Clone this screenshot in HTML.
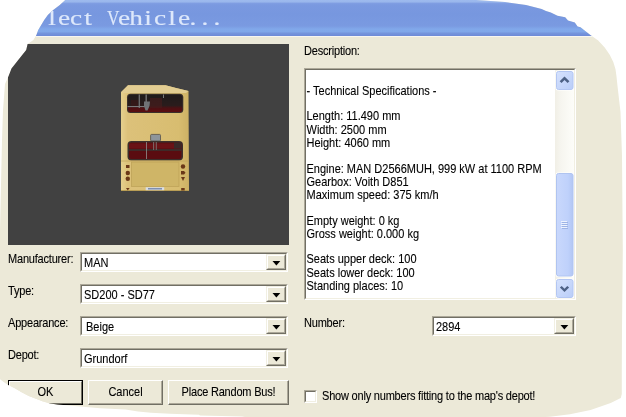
<!DOCTYPE html>
<html><head><meta charset="utf-8">
<style>
*{margin:0;padding:0;box-sizing:border-box}
html,body{width:626px;height:417px;overflow:hidden;background:#fff}
body{position:relative;font-family:"Liberation Sans",sans-serif;font-size:11px;color:#000;-webkit-text-stroke:0.1px #000}
#win{position:absolute;left:0;top:0;width:626px;height:417px;background:#ece9d8;
clip-path:polygon(65.2px 0px,476px 0px,505px 2px,526px 5px,541.6px 9px,546px 11px,550.8px 12.5px,557.5px 15.8px,565.2px 17.3px,568px 20.6px,574.8px 22.5px,577.6px 26.4px,580.5px 27.3px,591px 35.5px,591.8px 36px,598.2px 40.4px,604.7px 47.6px,609.7px 54.8px,613.3px 62px,615.5px 69.2px,616.5px 76.4px,617.5px 86px,620.5px 112px,622px 156px,622.8px 250px,622px 330px,621.8px 370px,621.8px 394px,620.8px 398px,610.7px 403px,590.6px 410px,570px 414.3px,550px 416.7px,545px 417px,245px 417px,242px 416.5px,200px 415.6px,199px 414.7px,170px 413.8px,151px 412.8px,138px 411.5px,125.6px 409.6px,100px 408.3px,86px 406.9px,57.5px 404.5px,50.3px 403.4px,43.1px 401.6px,35.9px 398.8px,28.8px 395.9px,21.6px 392.3px,14.4px 388px,7.2px 384.4px,0px 379.3px,0px 230px,2px 140px,3px 110px,5px 84px,8.6px 76px,11.5px 68.5px,19.2px 58.8px,26.2px 50px,27.6px 44px,33.4px 40px,36.4px 35px,38.2px 30px,41.2px 25px,44.2px 20px,47.8px 15px,53.2px 10px,59.8px 5px)}
.abs{position:absolute}
#title{left:0;top:0;width:626px;height:36px;background:linear-gradient(#9dbaee 0,#9ab7ec 1.8px,#7f9de2 3.5px,#7a99e0 5px,#7797df 14px,#7a9ae1 26px,#81a8ea 29px,#80a7e9 31.5px,#7494dc 33.5px,#6e8ad7 36px)}
#title span{-webkit-text-stroke:0.15px #dde8fb;position:absolute;left:22px;top:6px;font-family:"Liberation Serif",serif;font-size:21px;line-height:24px;color:#dde8fb;white-space:pre}
#title i{display:inline-block;width:12px;text-align:center;font-style:normal;transform:scaleX(1.3)}
#sep{left:0;top:36px;width:626px;height:1px;background:#f7f6f0}
#view{left:8px;top:44px;width:281px;height:201px;background:#414141}
.lbl{position:absolute;white-space:pre;line-height:13px;letter-spacing:-0.2px;transform:scaleY(1.1);transform-origin:0 10.3px}
.combo{position:absolute;background:#fff;border-top:1px solid #aca899;border-left:1px solid #aca899;border-right:1px solid #fff;border-bottom:1px solid #fff}
.combo .in{position:absolute;left:0;top:0;right:0;bottom:0;border-top:1px solid #716f64;border-left:1px solid #716f64;border-right:1px solid #f1efe2;border-bottom:1px solid #f1efe2}
.combo .txt{position:absolute;left:2px;top:3px;white-space:pre;line-height:13px;transform:scaleY(1.1);transform-origin:0 10.3px}
.combo .btn{position:absolute;right:0;top:0;width:20px;bottom:0;background:#ece9d8;border-top:1px solid #f1efe2;border-left:1px solid #f1efe2;border-right:1px solid #716f64;border-bottom:1px solid #716f64}
.combo .btn i{position:absolute;left:0;top:0;right:0;bottom:0;border-top:1px solid #fff;border-left:1px solid #fff;border-right:1px solid #aca899;border-bottom:1px solid #aca899}
.combo .btn svg{position:absolute;left:5px;top:6px}
.pbtn{position:absolute;background:#ece9d8;border-top:1px solid #fff;border-left:1px solid #fff;border-right:1px solid #716f64;border-bottom:1px solid #716f64;text-align:center;line-height:20px}
.bt{display:inline-block;transform:scaleY(1.1)}
.pbtn i{position:absolute;left:0;top:0;right:0;bottom:0;border-right:1px solid #aca899;border-bottom:1px solid #aca899}
#desc{left:304px;top:68px;width:272px;height:232px;background:#fff;border-top:1px solid #aca899;border-left:1px solid #aca899;border-right:1px solid #fff;border-bottom:1px solid #fff}
#desc .in{position:absolute;left:0;top:0;right:0;bottom:0;border-top:1px solid #716f64;border-left:1px solid #716f64;border-right:1px solid #f1efe2;border-bottom:1px solid #f1efe2}
#dtext{position:absolute;left:1.5px;top:2.6px;white-space:pre;line-height:11.8182px;transform:scaleY(1.1);transform-origin:0 0}
</style></head><body>
<div id="win">
 <div id="title" class="abs"><span><i style="visibility:hidden">S</i><i style="visibility:hidden">e</i><i>l</i><i>e</i><i>c</i><i>t</i><i>&nbsp;</i><i style="transform:scaleX(0.82)">V</i><i>e</i><i>h</i><i>i</i><i>c</i><i>l</i><i>e</i><i style="margin-left:-3px;margin-right:3px">.</i><i style="margin-left:-3px;margin-right:3px">.</i><i style="margin-left:-3px;margin-right:3px">.</i></span></div>
 <div id="sep" class="abs"></div>
 <div id="view" class="abs"></div>
 <svg class="abs" style="left:8px;top:44px;filter:blur(0.35px)" width="281" height="201" viewBox="8 44 281 201">
 <defs>
  <linearGradient id="bd" x1="0" x2="1" y1="0" y2="0">
   <stop offset="0" stop-color="#e4cf8e"/><stop offset="0.04" stop-color="#e2ca86"/><stop offset="0.1" stop-color="#dcc17a"/><stop offset="0.85" stop-color="#d8bd70"/><stop offset="1" stop-color="#cdb164"/>
  </linearGradient>
  <linearGradient id="uw" x1="0" x2="0" y1="0" y2="1">
   <stop offset="0" stop-color="#1f1b1b"/><stop offset="0.62" stop-color="#2a1c1c"/><stop offset="0.78" stop-color="#4e1013"/><stop offset="1" stop-color="#5a0d11"/>
  </linearGradient>
 </defs>
 <path d="M121 92 L128 85.3 L165.5 85.3 L176 88 L188.5 91 L189 191 L121 191 Z" fill="url(#bd)"/>
 <path d="M121.5 92 L128 85.3 L165.5 85.3 L176 88 L188.5 91 L186 93 L123 93 Z" fill="#e2cd92"/>
 <rect x="127" y="93.8" width="56.3" height="19.2" rx="3.5" fill="#3a302a"/>
 <rect x="128" y="94.8" width="54.3" height="17.2" rx="2.8" fill="url(#uw)"/>
 <rect x="150" y="98" width="12" height="10" fill="#4a1c1c" opacity="0.6"/>
 <rect x="131" y="100" width="7" height="6" fill="#3c1818" opacity="0.6"/>
 <rect x="138.7" y="94.5" width="1.1" height="13.5" fill="#7f7f80"/>
 <rect x="145.6" y="94.5" width="1.1" height="12" fill="#8a8a8c"/>
 <rect x="127.5" y="106" width="18.5" height="1.1" fill="#7a7a7c"/>
 <path d="M144 101.5 L150 101.5 L149.5 106 L147.5 110.5 L145.5 110.5 L144 106 Z" fill="#707276"/>
 <rect x="163" y="94.5" width="1" height="3.5" fill="#7a7a7a"/>
 <rect x="150.6" y="134.4" width="9.9" height="6.6" rx="1" fill="#8e959b" stroke="#55514a" stroke-width="0.8"/>
 <rect x="127.5" y="141" width="55.5" height="19.5" rx="4" fill="#3b302c"/>
 <rect x="129" y="142.6" width="52.5" height="16.4" rx="2.5" fill="#5a0c10"/>
 <rect x="129" y="143.5" width="52.5" height="5" fill="#6a1216"/>
 <rect x="129" y="149" width="52.5" height="2" fill="#3e2a28"/>
 <rect x="174" y="142.6" width="7.5" height="6" fill="#3a2828"/>
 <rect x="146" y="142" width="0.9" height="17" fill="#8a8280"/>
 <rect x="153.2" y="142" width="0.9" height="8" fill="#7d7575"/>
 <rect x="155.8" y="142" width="0.9" height="8" fill="#7d7575"/>
 <rect x="131.5" y="162" width="47.5" height="24.5" fill="#cfb567" stroke="#bfa459" stroke-width="0.8"/>
 <line x1="121" y1="161" x2="188.5" y2="161" stroke="#c2a65c" stroke-width="0.8"/>
 <line x1="121" y1="190.5" x2="189" y2="190.5" stroke="#b89d55" stroke-width="1"/>
 <g fill="#6a3818">
  <rect x="126" y="165" width="3.5" height="3"/>
  <circle cx="127.8" cy="173" r="2.2"/>
  <circle cx="127.8" cy="178.8" r="2.2"/>
  <path d="M126 188 L129.6 188 L127.8 190.5 Z"/>
  <circle cx="183" cy="166.5" r="2.2"/>
  <path d="M181 171 L184 171 L185.5 172.8 L184 174.6 L181 174.6 Z"/>
  <path d="M181 177 L185 177 L183 181 Z"/>
  <rect x="181.2" y="188" width="3.5" height="2.5"/>
 </g>
 <rect x="145.7" y="187.2" width="18.5" height="3" fill="#d9dde2"/>
 <rect x="148" y="188" width="14" height="1.5" fill="#7f8fb0"/>
</svg>

 <div class="lbl" style="left:8px;top:253px">Manufacturer:</div>
 <div class="combo" style="left:80px;top:252px;width:208px;height:20px"><div class="in"><div class="txt">MAN</div><div class="btn"><i></i><svg width="9" height="6"><path d="M0.5 0 L8.3 0 L4.4 4.6 Z" fill="#000"/></svg></div></div></div>
 <div class="lbl" style="left:8px;top:285px">Type:</div>
 <div class="combo" style="left:80px;top:284px;width:208px;height:20px"><div class="in"><div class="txt">SD200 - SD77</div><div class="btn"><i></i><svg width="9" height="6"><path d="M0.5 0 L8.3 0 L4.4 4.6 Z" fill="#000"/></svg></div></div></div>
 <div class="lbl" style="left:8px;top:317px">Appearance:</div>
 <div class="combo" style="left:80px;top:316px;width:208px;height:20px"><div class="in"><div class="txt" style="left:4px">Beige</div><div class="btn"><i></i><svg width="9" height="6"><path d="M0.5 0 L8.3 0 L4.4 4.6 Z" fill="#000"/></svg></div></div></div>
 <div class="lbl" style="left:8px;top:349px">Depot:</div>
 <div class="combo" style="left:80px;top:348px;width:208px;height:20px"><div class="in"><div class="txt">Grundorf</div><div class="btn"><i></i><svg width="9" height="6"><path d="M0.5 0 L8.3 0 L4.4 4.6 Z" fill="#000"/></svg></div></div></div>

 <div class="pbtn" style="left:8px;top:380px;width:75px;height:25px;border:1px solid #000"><div style="position:absolute;left:0;top:0;right:0;bottom:0;border-top:1px solid #fff;border-left:1px solid #fff;border-right:1px solid #716f64;border-bottom:1px solid #716f64;line-height:21px"><span class="bt">OK</span></div></div>
 <div class="pbtn" style="left:88px;top:380px;width:75px;height:25px;line-height:23px"><i></i><span class="bt">Cancel</span></div>
 <div class="pbtn" style="left:168px;top:380px;width:121px;height:25px;line-height:23px"><i></i><span class="bt" style="letter-spacing:-0.2px">Place Random Bus!</span></div>

 <div class="lbl" style="left:304px;top:44.5px">Description:</div>
 <div id="desc" class="abs"><div class="in"></div>
  <div id="dtext">
- Technical Specifications -

Length: 11.490 mm
Width: 2500 mm
Height: 4060 mm

Engine: MAN D2566MUH, 999 kW at 1100 RPM
Gearbox: Voith D851
Maximum speed: 375 km/h

Empty weight: 0 kg
Gross weight: 0.000 kg

Seats upper deck: 100
Seats lower deck: 100
Standing places: 10</div>

 </div>
 <svg class="abs" style="left:0;top:0" width="626" height="417">
 <defs>
  <linearGradient id="trk" x1="0" x2="1"><stop offset="0" stop-color="#f1efe6"/><stop offset="0.3" stop-color="#f6f5ef"/><stop offset="1" stop-color="#fdfdf9"/></linearGradient>
  <linearGradient id="btg" x1="0" y1="0" x2="1" y2="1"><stop offset="0" stop-color="#d6e2fd"/><stop offset="1" stop-color="#b9cdf8"/></linearGradient>
  <linearGradient id="thg" x1="0" x2="1"><stop offset="0" stop-color="#c9d8fc"/><stop offset="0.7" stop-color="#bfd1fb"/><stop offset="1" stop-color="#b2c6f4"/></linearGradient>
 </defs>
 <rect x="555" y="70" width="19" height="228" fill="url(#trk)"/>
 <rect x="555.5" y="70.5" width="18.5" height="20" rx="2.5" fill="#fff"/>
 <rect x="556.5" y="71.5" width="16.5" height="18" rx="2" fill="url(#btg)" stroke="#b3c6f2" stroke-width="1"/>
 <path d="M559.7 81.2 L564.5 76.6 L569.4 81.2 L567.6 83 L564.5 80 L561.5 83 Z" fill="#4d6185"/>
 <rect x="555.5" y="172.5" width="18.5" height="104.5" rx="2.5" fill="#fff"/>
 <rect x="556.5" y="173.5" width="16.5" height="102.5" rx="2" fill="url(#thg)" stroke="#b0c4f0" stroke-width="1"/>
 <g stroke="#eef3fe" stroke-width="1"><line x1="561" y1="221.5" x2="567" y2="221.5"/><line x1="561" y1="223.5" x2="567" y2="223.5"/><line x1="561" y1="225.5" x2="567" y2="225.5"/><line x1="561" y1="227.5" x2="567" y2="227.5"/></g>
 <g stroke="#9eb4e6" stroke-width="1"><line x1="562" y1="222.5" x2="568" y2="222.5"/><line x1="562" y1="224.5" x2="568" y2="224.5"/><line x1="562" y1="226.5" x2="568" y2="226.5"/><line x1="562" y1="228.5" x2="568" y2="228.5"/></g>
 <rect x="555.5" y="278.5" width="18.5" height="20" rx="2.5" fill="#fff"/>
 <rect x="556.5" y="279.5" width="16.5" height="18" rx="2" fill="url(#btg)" stroke="#b3c6f2" stroke-width="1"/>
 <path d="M559.9 287.6 L564.5 292.1 L569.1 287.6 L567.3 285.9 L564.5 288.7 L561.7 285.9 Z" fill="#4d6185"/>
</svg>

 <div class="lbl" style="left:304px;top:317px">Number:</div>
 <div class="combo" style="left:432px;top:316px;width:144px;height:20px"><div class="in"><div class="txt">2894</div><div class="btn"><i></i><svg width="9" height="6"><path d="M0.5 0 L8.3 0 L4.4 4.6 Z" fill="#000"/></svg></div></div></div>

 <div class="abs" style="left:304px;top:390px;width:13px;height:13px;background:#fff;border-top:1px solid #aca899;border-left:1px solid #aca899;border-right:1px solid #fff;border-bottom:1px solid #fff"><div style="position:absolute;left:0;top:0;right:0;bottom:0;border-top:1px solid #716f64;border-left:1px solid #716f64;border-right:1px solid #f1efe2;border-bottom:1px solid #f1efe2"></div></div>
 <div class="lbl" style="left:322px;top:390px">Show only numbers fitting to the map's depot!</div>
</div>
</body></html>
